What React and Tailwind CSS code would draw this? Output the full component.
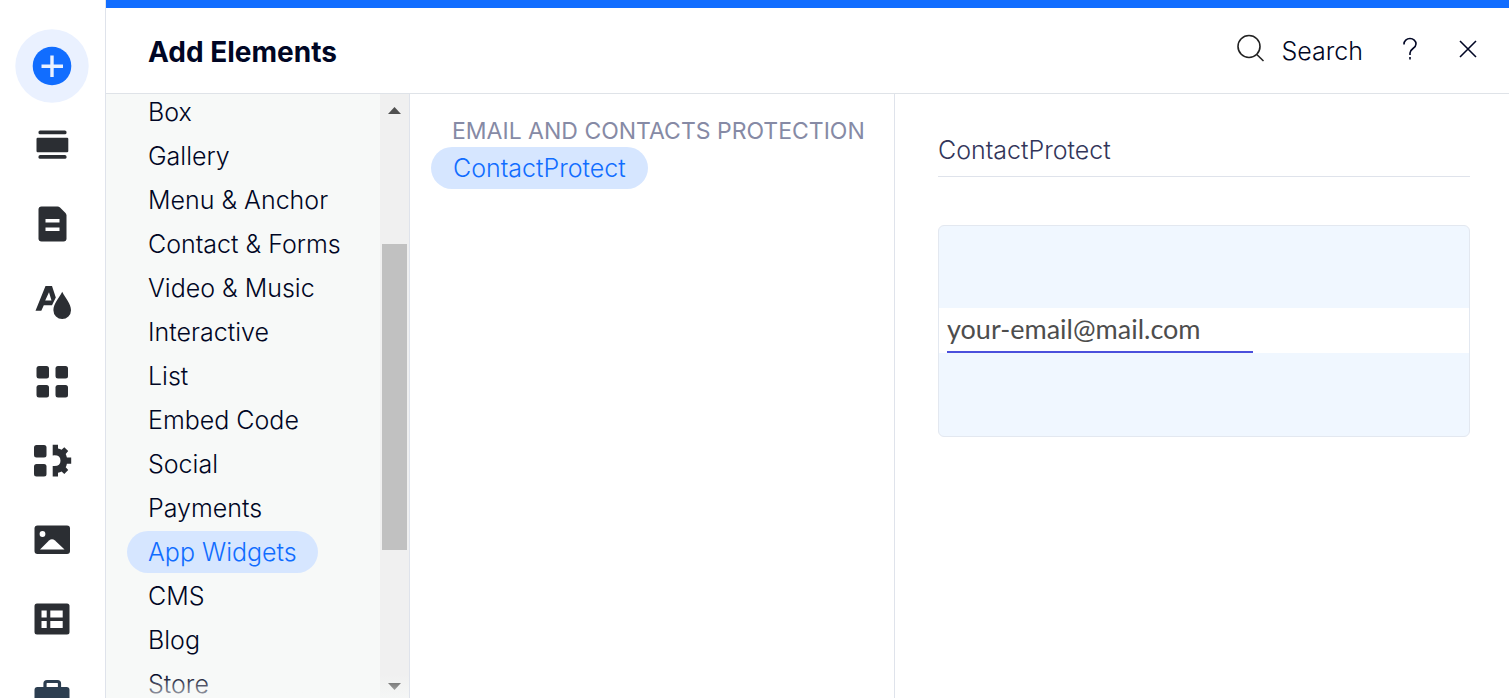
import React from "react";

const categories = [
  "Box",
  "Gallery",
  "Menu & Anchor",
  "Contact & Forms",
  "Video & Music",
  "Interactive",
  "List",
  "Embed Code",
  "Social",
  "Payments",
  "App Widgets",
  "CMS",
  "Blog",
  "Store",
];

const AddIcon = () => (
  <svg width="74" height="74" viewBox="0 0 74 74">
    <circle cx="37" cy="37" r="36.7" fill="#eaf1ff" />
    <circle cx="37" cy="37" r="19.3" fill="#116dff" />
    <path d="M37 26.5v21.5M26.5 37.3h21.5" stroke="#eaf1ff" strokeWidth="3.4" />
  </svg>
);

const SectionIcon = () => (
  <svg width="40" height="40" viewBox="0 0 40 40" fill="#2b2e33">
    <rect x="6.5" y="5.5" width="28" height="3.8" rx="1.6" />
    <rect x="4.5" y="12.8" width="31.8" height="14.4" rx="1.2" />
    <rect x="6.5" y="30" width="28" height="3.8" rx="1.6" />
  </svg>
);

const PageIcon = () => (
  <svg width="40" height="40" viewBox="0 0 40 40">
    <path
      d="M9.5 2.5h16q1.5 0 2.5 1l5.5 5.500q1 1 1 2.500v23q0 3-3 3h-22q-3 0-3-3v-29q0-3 3-3z"
      fill="#2b2e33"
    />
    <path d="M13.500 16.700h14M13.500 25.200h14" stroke="#fff" strokeWidth="3.600" />
  </svg>
);

const DesignIcon = () => (
  <svg width="40" height="40" viewBox="0 0 40 40">
    <path
      fillRule="evenodd"
      d="M13.500 3h6.500l3.800 11.500-3.800 7.700h-8.200L9.300 27.800H3.500zM17 9.200l-3.800 8.300h6.300z"
      fill="#2b2e33"
    />
    <path
      d="M30.200 8.800C33.500 15.500 39 20.500 39 27.200a8.800 8.800 0 0 1-17.600 0C21.400 20.500 26.900 15.500 30.200 8.800z"
      fill="#2b2e33"
    />
  </svg>
);

const AppsIcon = () => (
  <svg width="40" height="40" viewBox="0 0 40 40" fill="#2b2e33">
    <rect x="4.500" y="4" width="12.500" height="12.500" rx="2.500" />
    <rect x="23.500" y="4" width="12.500" height="12.500" rx="2.500" />
    <rect x="4.500" y="23" width="12.500" height="12.500" rx="2.500" />
    <rect x="23.500" y="23" width="12.500" height="12.500" rx="2.500" />
  </svg>
);

const BusinessIcon = () => (
  <svg width="40" height="40" viewBox="0 0 40 40" fill="#2b2e33">
    <rect x="2" y="4" width="12.500" height="12.500" rx="2.500" />
    <rect x="2" y="23" width="12.500" height="12.500" rx="2.500" />
    <path d="M20.700 3.800h5.300v3.700q2 .4 3.600 1.300l2.700-2.600 3.900 3.900-2.500 2.800q.8 1.500 1.200 3.600h4.300v6.200h-4.300q-.4 2-1.200 3.600l2.500 2.800-3.900 3.900-2.700-2.600q-1.600.9-3.600 1.300v3.700h-5.300V25q7.800.8 7.800-5.300t-7.800-5.300z" />
  </svg>
);

const MediaIcon = () => (
  <svg width="40" height="40" viewBox="0 0 40 40">
    <rect x="2.500" y="5.500" width="35.500" height="28.500" rx="3" fill="#2b2e33" />
    <circle cx="10.500" cy="14" r="2.900" fill="#fff" />
    <path d="M8 29.500l9-9q3-2.500 6 0l9.500 9z" fill="#fff" />
  </svg>
);

const CmsIcon = () => (
  <svg width="40" height="40" viewBox="0 0 40 40">
    <rect x="2.500" y="4.500" width="35" height="31" rx="2.500" fill="#2b2e33" />
    <path d="M9.500 11.500h5.200v7H9.500zM18.300 11.500h12.400v7H18.300zM9.500 22h5.200v7H9.500zM18.300 22h12.400v7H18.300z" fill="#fff" />
  </svg>
);

const ToolsIcon = () => (
  <svg width="40" height="40" viewBox="0 0 40 40">
    <path d="M13 10V5.500q0-2 2-2h10.500q2 0 2 2V10" stroke="#2c3e50" strokeWidth="3.200" fill="none" />
    <rect x="2.500" y="9" width="35" height="28" rx="3" fill="#2c3e50" />
  </svg>
);

const railItems = [
  { label: "Add Elements", Icon: AddIcon },
  { label: "Add Section", Icon: SectionIcon },
  { label: "Pages & Menu", Icon: PageIcon },
  { label: "Site Design", Icon: DesignIcon },
  { label: "Add Apps", Icon: AppsIcon },
  { label: "My Business", Icon: BusinessIcon },
  { label: "Media", Icon: MediaIcon },
  { label: "CMS", Icon: CmsIcon },
  { label: "Tools", Icon: ToolsIcon },
];

const Rail = () => (
  <nav className="flex w-[106px] shrink-0 flex-col border-r border-[#dfe3eb] pt-[26px] pr-px">
    {railItems.map(({ label, Icon }) => (
      <button
        key={label}
        aria-label={label}
        className="flex h-[79px] shrink-0 items-center justify-center"
      >
        <Icon />
      </button>
    ))}
  </nav>
);

const Header = () => (
  <header className="flex h-[94px] shrink-0 items-center border-t-8 border-b border-t-[#116dff] border-b-[#dfe3e8] pr-8 pb-1 pl-[42px]">
    <h1 className="flex-1 pt-1.5 text-[28px] font-bold">Add Elements</h1>
    <button className="flex items-center gap-4">
      <svg width="30" height="30" viewBox="0 0 30 30" fill="none" stroke="#222" strokeWidth="1.600">
        <circle cx="14" cy="12.500" r="11" />
        <path d="M21.800 20.500l6.700 6.500" />
      </svg>
      <span className="pt-1.5 text-[25px] font-light">Search</span>
    </button>
    <button aria-label="Help" className="ml-[39px]">
      <svg width="16" height="24" viewBox="0 0 16 24" fill="none" stroke="#000624" strokeWidth="1.600">
        <path d="M2 7.500V7a6 5.500 0 0 1 12 0c0 4.500-6 4.500-6 9v2M8 20v2.500" />
      </svg>
    </button>
    <button aria-label="Close" className="ml-[41px]">
      <svg width="18" height="18" viewBox="0 0 18 18" stroke="#000624" strokeWidth="1.600">
        <path d="M1 1l16 16M17 1L1 17" />
      </svg>
    </button>
  </header>
);

const Scrollbar = () => (
  <div className="flex w-[29px] flex-col items-center bg-[#f0f0f0]">
    <button aria-label="Scroll up" className="flex h-8 items-center">
      <svg width="13" height="7" viewBox="0 0 13 7" fill="#505050">
        <path d="M6.500 0L13 7H0z" />
      </svg>
    </button>
    <div className="flex w-full flex-1 flex-col px-0.5">
      <div className="flex-[59]" />
      <div className="flex-[153] bg-[#c1c1c1]" />
      <div className="flex-[62]" />
    </div>
    <button aria-label="Scroll down" className="flex h-6 items-center">
      <svg width="13" height="7" viewBox="0 0 13 7" fill="#505050">
        <path d="M6.500 7L0 0h13z" />
      </svg>
    </button>
  </div>
);

const Categories = () => (
  <div className="relative flex w-[304px] shrink-0 overflow-hidden border-r border-[#dfe3eb] bg-[#f7f9f8]">
    <ul className="-mt-[3px] flex flex-1 flex-col items-start gap-0.5 pl-[21px]">
      {categories.map((name) => (
        <li key={name}>
          <button
            className={`h-[42px] rounded-full px-[21px] pt-0.5 text-[25px] font-light ${
              name === "App Widgets" ? "bg-[#d6e6ff] text-[#116dff]" : ""
            }`}
          >
            {name}
          </button>
        </li>
      ))}
    </ul>
    <Scrollbar />
    <div className="pointer-events-none absolute inset-x-0 bottom-0 h-6 bg-gradient-to-t from-[#f7f9f8]/70 to-transparent" />
  </div>
);

const Sections = () => (
  <div className="flex w-[485px] shrink-0 flex-col items-start border-r border-[#dfe3eb] pt-[21px] pl-[21px]">
    <h2 className="px-[21px] text-[23px] leading-8 whitespace-nowrap text-[#868aa5]">
      EMAIL AND CONTACTS PROTECTION
    </h2>
    <button className="h-[42px] rounded-full bg-[#d6e6ff] px-[22px] pt-0.5 text-[25px] font-light text-[#116dff]">
      ContactProtect
    </button>
  </div>
);

const Preview = () => (
  <section className="min-w-0 flex-1 pt-[38px] pr-[39px] pl-[43px]">
    <h2 className="border-b border-[#dfe3eb] pb-2 text-[25px] leading-9 font-light text-[#33365a]">
      ContactProtect
    </h2>
    <button className="mt-12 block w-full overflow-hidden rounded-md border border-[#e3e8f0] bg-[#f0f7ff] pt-[82px] pb-[83px] text-left">
      <span className="flex h-[45px] bg-white pl-2">
        <span className="w-[306px] border-b-2 border-[#4b50dc] font-['Lato',sans-serif] text-[27px] leading-[42px] text-[#4d4d4d]">
          your-email@mail.com
        </span>
      </span>
    </button>
  </section>
);

const App = () => {
  return (
    <div className="flex h-screen overflow-hidden bg-white font-['Inter',sans-serif] text-[#000624]">
      <Rail />
      <main className="flex min-w-0 flex-1 flex-col">
        <Header />
        <div className="flex min-h-0 flex-1">
          <Categories />
          <Sections />
          <Preview />
        </div>
      </main>
    </div>
  );
};

export default App;
